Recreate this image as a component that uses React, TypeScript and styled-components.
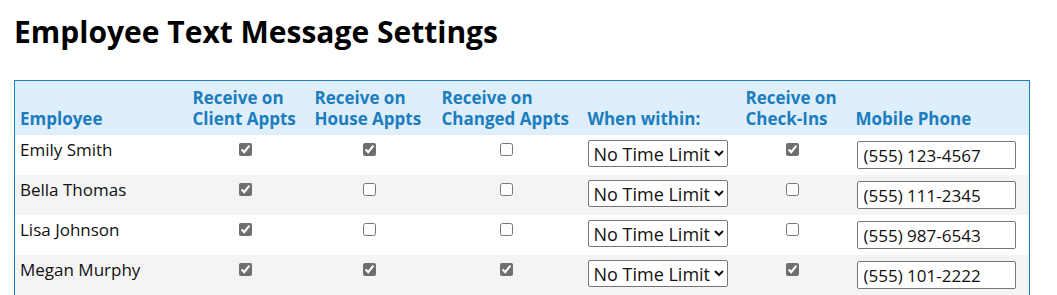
import styled, { createGlobalStyle } from "styled-components";

const GlobalStyle = createGlobalStyle`
  body {
    margin: 0;
    background: #ffffff;
    font-family: "Open Sans", "Noto Sans", sans-serif;
    color: #111111;
  }
`;

interface Employee {
  name: string;
  client: boolean;
  house: boolean;
  changed: boolean;
  checkIns: boolean;
  phone: string;
}

const employees: Employee[] = [
  { name: "Emily Smith", client: true, house: true, changed: false, checkIns: true, phone: "(555) 123-4567" },
  { name: "Bella Thomas", client: true, house: false, changed: false, checkIns: false, phone: "(555) 111-2345" },
  { name: "Lisa Johnson", client: true, house: false, changed: false, checkIns: false, phone: "(555) 987-6543" },
  { name: "Megan Murphy", client: true, house: true, changed: true, checkIns: true, phone: "(555) 101-2222" },
];

const columnWidths = [173, 122, 127, 146, 158, 110, 179];

const App = () => {
  return (
    <>
      <GlobalStyle />
      <Page>
        <Title>Employee Text Message Settings</Title>
        <Table>
          <colgroup>
            {columnWidths.map((w, i) => (
              <col key={i} style={{ width: w }} />
            ))}
          </colgroup>
          <thead>
            <HeaderRow>
              <Th>Employee</Th>
              <Th>
                Receive on
                <br />
                Client Appts
              </Th>
              <Th>
                Receive on
                <br />
                House Appts
              </Th>
              <Th>
                Receive on
                <br />
                Changed Appts
              </Th>
              <Th>When within:</Th>
              <Th>
                Receive on
                <br />
                Check-Ins
              </Th>
              <Th>Mobile Phone</Th>
            </HeaderRow>
          </thead>
          <tbody>
            {employees.map((e, index) => (
              <Row key={e.name} striped={index % 2 === 1}>
                <NameCell>{e.name}</NameCell>
                <CheckCell>
                  <Check type="checkbox" defaultChecked={e.client} />
                </CheckCell>
                <CheckCell>
                  <Check type="checkbox" defaultChecked={e.house} />
                </CheckCell>
                <CheckCell>
                  <Check type="checkbox" defaultChecked={e.changed} />
                </CheckCell>
                <Td>
                  <Select defaultValue="none">
                    <option value="none">No Time Limit</option>
                    <option value="1">1 Hour</option>
                    <option value="2">2 Hours</option>
                  </Select>
                </Td>
                <CheckCell>
                  <Check type="checkbox" defaultChecked={e.checkIns} />
                </CheckCell>
                <Td>
                  <PhoneInput type="text" defaultValue={e.phone} />
                </Td>
              </Row>
            ))}
          </tbody>
        </Table>
      </Page>
    </>
  );
};

interface striped {
  striped: boolean;
}

const Page = styled.div`
  padding: 13px 14px 0 14px;
`;

const Title = styled.h1`
  margin: 0 0 29px 0;
  font-size: 30px;
  font-weight: 700;
  color: #000000;
  line-height: 38px;
`;

const Table = styled.table`
  width: 1015px;
  table-layout: fixed;
  border-collapse: collapse;
  border: 1px solid #1a7fc0;
  font-size: 17px;
`;

const HeaderRow = styled.tr`
  background-color: #deeefb;
`;

const Th = styled.th`
  text-align: left;
  vertical-align: bottom;
  padding: 6px 5px 6px 5px;
  color: #1b7dbe;
  font-weight: 700;
  font-size: 17px;
  line-height: 21px;
  white-space: nowrap;
`;

const Row = styled.tr.withConfig({
  shouldForwardProp: (prop) => prop !== "striped",
})<striped>`
  background-color: ${(props) => (props.striped ? "#f4f4f4" : "#ffffff")};
`;

const Td = styled.td`
  height: 40px;
  box-sizing: border-box;
  padding: 5px 5px 5px 5px;
  vertical-align: top;
`;

const NameCell = styled(Td)`
  padding-top: 4px;
  line-height: 22px;
  color: #111111;
`;

const CheckCell = styled(Td)`
  text-align: center;
  padding: 3px 13px 5px 5px;
`;

const Check = styled.input`
  width: 13px;
  height: 13px;
  margin: 2px 3px 3px 4px;
  accent-color: #6f6f6f;
`;

const Select = styled.select`
  width: 140px;
  height: 27px;
  box-sizing: border-box;
  border: 1px solid #767676;
  border-radius: 2px;
  background: #ffffff;
  font-family: "Open Sans", "Noto Sans", sans-serif;
  font-size: 18px;
  color: #111111;
  padding: 0 0 0 1px;
`;

const PhoneInput = styled.input`
  width: 159px;
  height: 28px;
  box-sizing: border-box;
  margin: 1px 0 0 1px;
  border: 1px solid #767676;
  border-radius: 2px;
  padding: 1px 6px;
  font-family: "Open Sans", "Noto Sans", sans-serif;
  font-size: 17px;
  color: #111111;
`;

export default App;
